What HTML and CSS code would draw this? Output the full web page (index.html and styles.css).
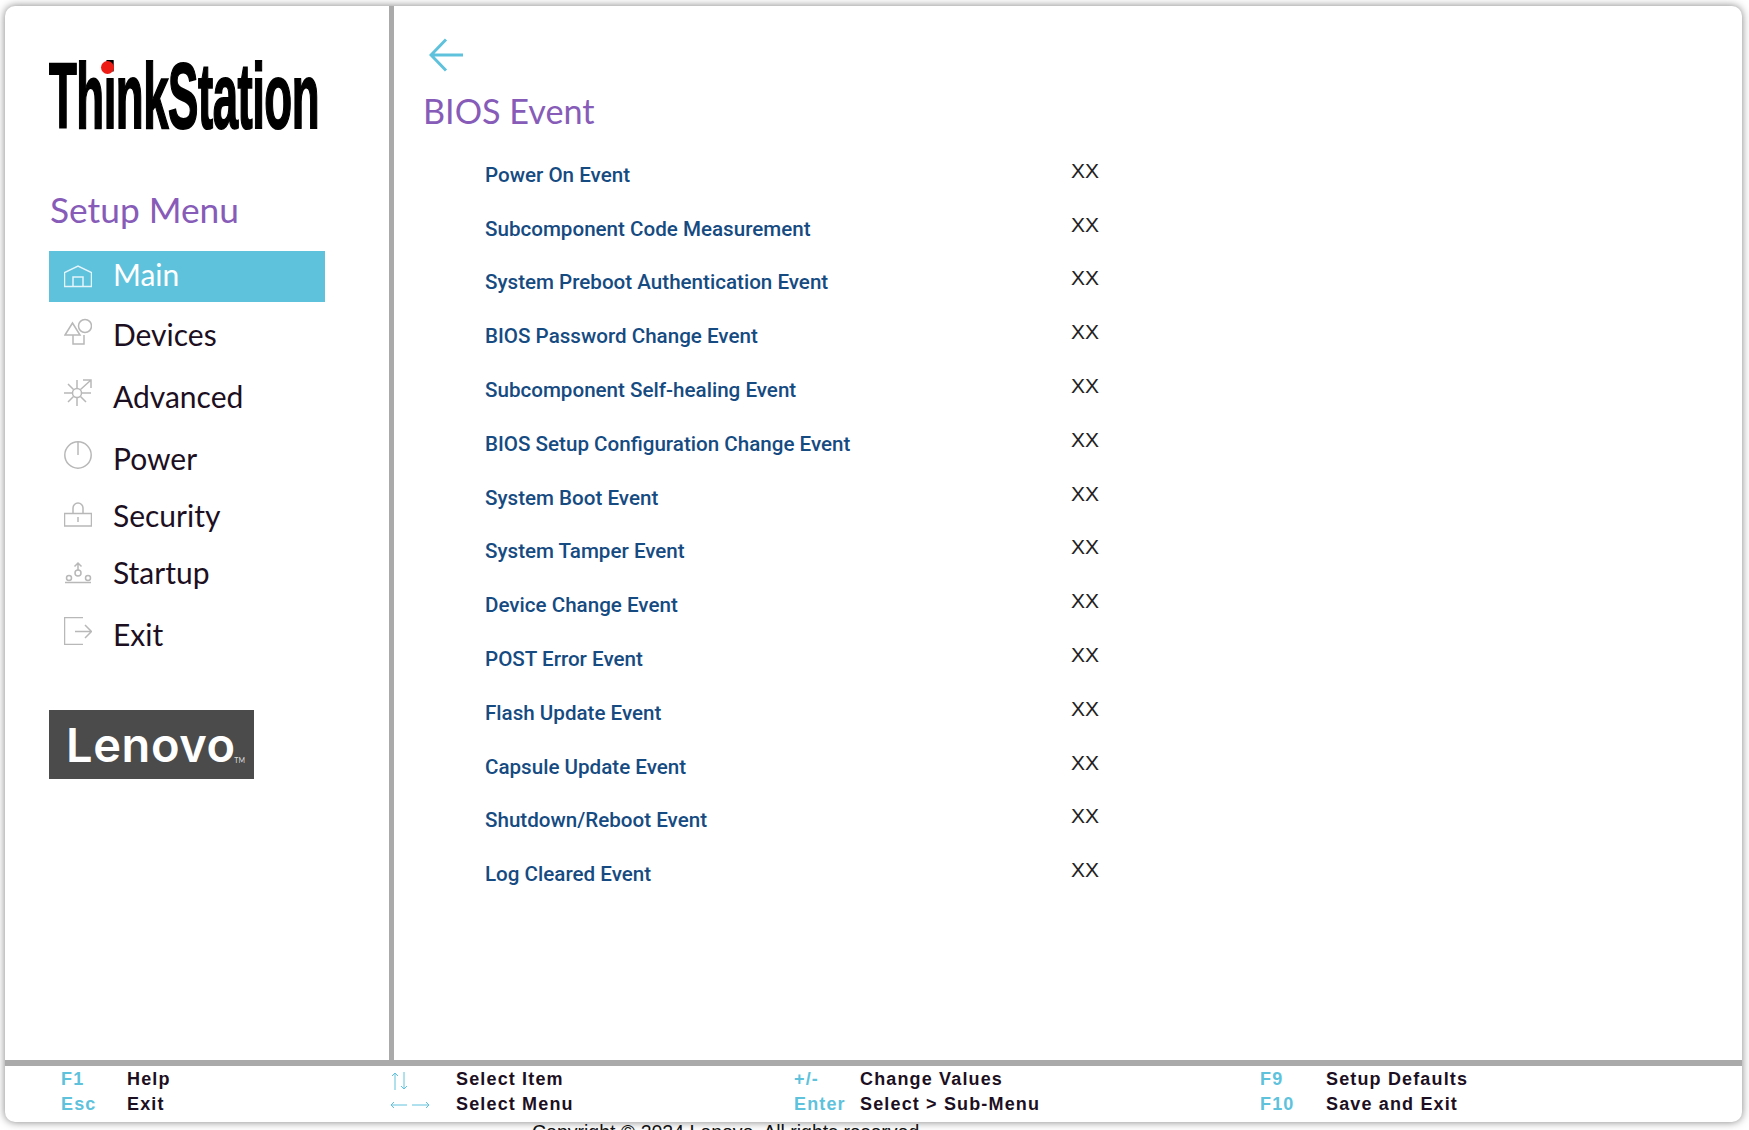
FILE: index.html
```html
<!DOCTYPE html>
<html lang="en">
<head>
    <meta charset="UTF-8">
    <meta name="viewport" content="width=device-width, initial-scale=1.0">
    <title>BIOS Event</title>
    <link rel="stylesheet" href="styles.css">
</head>
<body>
    <div class="card">
        <div class="top">
            <aside class="sidebar">
                <div class="brand"><span class="brand-text">ThinkStation</span><span class="brand-dot"></span></div>
                <h2 class="menu-title">Setup Menu</h2>
                <ul class="menu">
                    <li class="item item-main active">
                        <svg class="icon" viewBox="0 0 28 28"><path d="M.5 9.500v14h27v-14L14 3z M9 23.500V14h10v9.500"/></svg>
                        <span>Main</span>
                    </li>
                    <li class="item item-tall">
                        <svg class="icon raise" viewBox="0 0 28 28"><path d="M1 18 8.500 6 16 18z"/><circle cx="21" cy="9" r="6.500"/><path d="M9 18v9h11v-9"/></svg>
                        <span>Devices</span>
                    </li>
                    <li class="item item-mid">
                        <svg class="icon raise" viewBox="0 0 28 28"><circle cx="13" cy="14" r="4.500"/><path d="M0 14h8M18 14h9M13 1v8M13 19v8M4 5l5.500 5.500M4 23l5.500-5.500M22 23l-5.500-5.500M16.500 10.500 27 1M19 1h8v8"/></svg>
                        <span>Advanced</span>
                    </li>
                    <li class="item item-tall">
                        <svg class="icon raise" viewBox="0 0 28 28"><circle cx="14" cy="14" r="13.200"/><path d="M14 1v13"/></svg>
                        <span>Power</span>
                    </li>
                    <li class="item item-short">
                        <svg class="icon raise-sm" viewBox="0 0 28 28"><path d="M.5 13.500h27v12.500H.5z"/><path d="M9 13.500V8a5 5 0 0 1 10 0v5.500M14 17v5"/></svg>
                        <span>Security</span>
                    </li>
                    <li class="item item-tall">
                        <svg class="icon" viewBox="0 0 28 28"><path d="M1 23.500h26M14 4v7M10.500 7.500 14 4l3.500 3.500"/><circle cx="14" cy="14" r="3"/><circle cx="5" cy="19" r="2.500"/><circle cx="24" cy="19" r="2.500"/></svg>
                        <span>Startup</span>
                    </li>
                    <li class="item item-mid">
                        <svg class="icon raise" viewBox="0 0 28 28"><path d="M19 .5H.5v27H19M11 14.500h16.500M21 8l6.500 6.500L21 21"/></svg>
                        <span>Exit</span>
                    </li>
                </ul>
                <div class="lenovo"><span class="lenovo-text">Lenovo</span><span class="tm">TM</span></div>
            </aside>
            <main class="content">
                <svg class="back" viewBox="0 0 34 34"><path d="M34 17H3M17 1.500 2 17l15 15.500"/></svg>
                <h1 class="page-title">BIOS Event</h1>
                <div class="events">
                    <div class="row"><span class="label">Power On Event</span><span class="value">XX</span></div>
                    <div class="row"><span class="label">Subcomponent Code Measurement</span><span class="value">XX</span></div>
                    <div class="row"><span class="label">System Preboot Authentication Event</span><span class="value">XX</span></div>
                    <div class="row"><span class="label">BIOS Password Change Event</span><span class="value">XX</span></div>
                    <div class="row"><span class="label">Subcomponent Self-healing Event</span><span class="value">XX</span></div>
                    <div class="row"><span class="label">BIOS Setup Configuration Change Event</span><span class="value">XX</span></div>
                    <div class="row"><span class="label">System Boot Event</span><span class="value">XX</span></div>
                    <div class="row"><span class="label">System Tamper Event</span><span class="value">XX</span></div>
                    <div class="row"><span class="label">Device Change Event</span><span class="value">XX</span></div>
                    <div class="row"><span class="label">POST Error Event</span><span class="value">XX</span></div>
                    <div class="row"><span class="label">Flash Update Event</span><span class="value">XX</span></div>
                    <div class="row"><span class="label">Capsule Update Event</span><span class="value">XX</span></div>
                    <div class="row"><span class="label">Shutdown/Reboot Event</span><span class="value">XX</span></div>
                    <div class="row"><span class="label">Log Cleared Event</span><span class="value">XX</span></div>
                </div>
            </main>
        </div>
        <footer class="keys">
            <div class="key-group group-1">
                <span class="key">F1</span><span class="desc">Help</span>
                <span class="key">Esc</span><span class="desc">Exit</span>
            </div>
            <div class="key-group group-2">
                <span class="key"><svg class="arrows-v" viewBox="0 0 20 18"><path d="M5 18V1M2 4l3-3 3 3M14 0v17M11 14l3 3 3-3"/></svg></span><span class="desc">Select Item</span>
                <span class="key"><svg class="arrows-h" viewBox="0 0 40 10"><path d="M17 5H1M4 2 1 5l3 3M22 5h17M36 2l3 3-3 3"/></svg></span><span class="desc">Select Menu</span>
            </div>
            <div class="key-group group-3">
                <span class="key">+/-</span><span class="desc">Change Values</span>
                <span class="key">Enter</span><span class="desc">Select &gt; Sub-Menu</span>
            </div>
            <div class="key-group">
                <span class="key">F9</span><span class="desc">Setup Defaults</span>
                <span class="key">F10</span><span class="desc">Save and Exit</span>
            </div>
        </footer>
    </div>
    <p class="copyright">Copyright © 2024 Lenovo. All rights reserved.</p>
</body>
</html>
```

FILE: styles.css
```css
html, body {
    height: 100%;
    overflow: hidden;
}

body {
    margin: 0;
    padding: 6px 7px 0 5px;
    box-sizing: border-box;
    background-color: #fff;
    font-family: Lato, sans-serif;
}

.card {
    height: 1116px;
    border-radius: 10px;
    background-color: #fff;
    box-shadow: 0 0 8px rgba(0, 0, 0, 0.5);
    display: flex;
    flex-direction: column;
    overflow: hidden;
}

.top {
    height: 1054px;
    display: flex;
}

/* left column */
.sidebar {
    width: 389px;
    box-sizing: border-box;
    padding: 55px 0 0 44px;
    border-right: 5px solid #aaa;
    flex: none;
}

.brand {
    position: relative;
    height: 70px;
    width: 270px;
}

.brand-text {
    display: block;
    font-family: "Liberation Sans", sans-serif;
    font-weight: bold;
    font-size: 93px;
    line-height: 70px;
    color: #000;
    letter-spacing: -1px;
    -webkit-text-stroke: 2px #000;
    transform: scaleX(0.49);
    transform-origin: left center;
    white-space: nowrap;
}

.brand-dot {
    position: absolute;
    left: 52px;
    top: 0;
    width: 13px;
    height: 13px;
    border-radius: 50%;
    background-color: #ed1c14;
}

.menu-title {
    margin: 57px 0 0 1px;
    font-size: 35.3px;
    line-height: 44px;
    font-weight: 400;
    color: #875cb8;
}

.menu {
    list-style: none;
    margin: 19px 0 0;
    padding: 0;
    width: 276px;
}

.item {
    display: flex;
    align-items: center;
    padding-left: 15px;
    gap: 21px;
    font-size: 30px;
    color: #1d0f22;
}

.item span {
    margin-bottom: 2px;
}

.item-main { height: 51px; }
.item-tall { height: 66px; }
.item-mid { height: 58px; }
.item-short { height: 48px; }

.active {
    background-color: #5ec2dc;
    color: #fff;
}

.active span {
    margin-bottom: 5px;
}

.icon {
    width: 28px;
    height: 28px;
    flex: none;
    fill: none;
    stroke: #b8b8b8;
    stroke-width: 1.5;
}

.active .icon {
    stroke: #e4f5fa;
}

.raise { margin-bottom: 8px; }
.raise-sm { margin-bottom: 4px; }

.lenovo {
    position: relative;
    margin-top: 46px;
    width: 205px;
    height: 69px;
    background-color: #4b4b4b;
    color: #fff;
    display: flex;
    align-items: center;
    padding-left: 17px;
    box-sizing: border-box;
}

.lenovo-text {
    font-family: Inter, sans-serif;
    font-size: 47px;
    font-weight: 600;
    letter-spacing: 0.6px;
}

.tm {
    position: absolute;
    right: 9px;
    bottom: 15px;
    font-size: 7px;
    color: #ddd;
}

/* right column */
.content {
    flex: 1;
    padding: 32px 0 0 31px;
}

.back {
    display: block;
    margin-left: 4px;
    width: 34px;
    height: 34px;
    fill: none;
    stroke: #5ec2dc;
    stroke-width: 3;
}

.page-title {
    margin: 17px 0 0 -2px;
    font-size: 34.2px;
    line-height: 44px;
    font-weight: 400;
    color: #875cb8;
}

.events {
    margin: 15px 0 0 60px;
}

.row {
    display: flex;
    height: 53.8px;
    align-items: center;
}

.label {
    width: 586px;
    font-family: Roboto, sans-serif;
    font-size: 20.6px;
    font-weight: 500;
    color: #164b82;
}

.value {
    font-family: "Liberation Sans", sans-serif;
    font-size: 21px;
    color: #222;
    margin-bottom: 8px;
}

/* key legend */
.keys {
    flex: 1;
    display: flex;
    border-top: 6px solid #aaa;
    padding: 1px 0 0 56px;
    font-family: "Liberation Sans", sans-serif;
    font-weight: bold;
    font-size: 18px;
    letter-spacing: 1.15px;
    color: #1d0f22;
}

.key-group {
    display: grid;
    grid-template-columns: 66px auto;
    grid-auto-rows: 25px;
    align-items: center;
    align-content: start;
}

.group-1 { width: 329px; }
.group-2 { width: 404px; }
.group-3 { width: 466px; }

.key {
    color: #5ec2dc;
    display: flex;
    align-items: center;
}

.arrows-v {
    width: 20px;
    height: 18px;
    margin-top: 3px;
    fill: none;
    stroke: #5ec2dc;
    stroke-width: 1;
}

.arrows-h {
    width: 40px;
    height: 10px;
    fill: none;
    stroke: #5ec2dc;
    stroke-width: 1;
}

.copyright {
    margin: 0;
    padding-left: 527px;
    font-family: "Liberation Sans", sans-serif;
    font-size: 19.5px;
    line-height: 20px;
    color: #111;
}
```
